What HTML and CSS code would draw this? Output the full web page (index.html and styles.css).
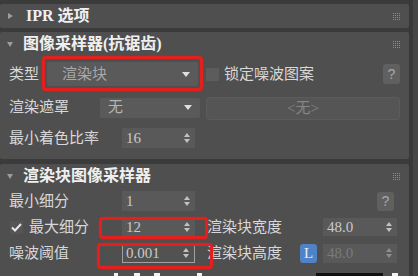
FILE: index.html
```html
<!DOCTYPE html>
<html lang="zh-CN">
<head>
    <meta charset="UTF-8">
    <meta name="viewport" content="width=device-width, initial-scale=1.0">
    <title>图像采样器</title>
    <link rel="stylesheet" href="styles.css">
</head>
<body>

<div class="app">
    <div class="rollouts">

        <section class="rollout ipr">
            <div class="head">
                <span class="tri closed"></span>
                <span class="title">IPR 选项</span>
                <svg class="grip" width="7" height="7" viewBox="0 0 7 7">
                    <g fill="#8c8c8c">
                        <rect x="0" y="0" width="1" height="7"/><rect x="2" y="0" width="1" height="7"/>
                        <rect x="4" y="0" width="1" height="7"/><rect x="6" y="0" width="1" height="7"/>
                    </g>
                    <g fill="#4f4f4f">
                        <rect x="0" y="1" width="7" height="1"/><rect x="0" y="3" width="7" height="1"/>
                        <rect x="0" y="5" width="7" height="1"/>
                    </g>
                </svg>
            </div>
        </section>

        <section class="rollout sampler">
            <div class="head">
                <span class="tri open"></span>
                <span class="title">图像采样器(抗锯齿)</span>
                <svg class="grip" width="7" height="7" viewBox="0 0 7 7">
                    <g fill="#8c8c8c">
                        <rect x="0" y="0" width="1" height="7"/><rect x="2" y="0" width="1" height="7"/>
                        <rect x="4" y="0" width="1" height="7"/><rect x="6" y="0" width="1" height="7"/>
                    </g>
                    <g fill="#4f4f4f">
                        <rect x="0" y="1" width="7" height="1"/><rect x="0" y="3" width="7" height="1"/>
                        <rect x="0" y="5" width="7" height="1"/>
                    </g>
                </svg>
            </div>

            <div class="row type-row">
                <div class="cell-l">
                    <span class="lbl">类型</span>
                    <div class="drop drop-type">渲染块<span class="arrow"></span></div>
                </div>
                <div class="cell-r">
                    <span class="check"></span>
                    <span class="lbl">锁定噪波图案</span>
                    <span class="help">?</span>
                </div>
            </div>

            <div class="row mask-row">
                <div class="cell-l">
                    <span class="lbl">渲染遮罩</span>
                    <div class="drop drop-mask">无<span class="arrow"></span></div>
                </div>
                <div class="cell-r">
                    <div class="pick">&lt;无&gt;</div>
                </div>
            </div>

            <div class="row rate-row">
                <div class="cell-l">
                    <span class="lbl">最小着色比率</span>
                    <div class="spin">16<span class="updown"></span></div>
                </div>
                <div class="cell-r"></div>
            </div>
        </section>

        <section class="rollout bucket">
            <div class="head">
                <span class="tri open"></span>
                <span class="title">渲染块图像采样器</span>
                <svg class="grip" width="7" height="7" viewBox="0 0 7 7">
                    <g fill="#8c8c8c">
                        <rect x="0" y="0" width="1" height="7"/><rect x="2" y="0" width="1" height="7"/>
                        <rect x="4" y="0" width="1" height="7"/><rect x="6" y="0" width="1" height="7"/>
                    </g>
                    <g fill="#4f4f4f">
                        <rect x="0" y="1" width="7" height="1"/><rect x="0" y="3" width="7" height="1"/>
                        <rect x="0" y="5" width="7" height="1"/>
                    </g>
                </svg>
            </div>

            <div class="row brow">
                <div class="cell-l">
                    <span class="lbl">最小细分</span>
                    <div class="spin">1<span class="updown"></span></div>
                </div>
                <div class="cell-r">
                    <span class="help help-b">?</span>
                </div>
            </div>

            <div class="row brow">
                <div class="cell-l">
                    <span class="check checked">
                        <svg width="11" height="9" viewBox="0 0 11 9"><path d="M1 4.5 L4 7.5 L10 1" fill="none" stroke="#e8e8e8" stroke-width="2"/></svg>
                    </span>
                    <span class="lbl">最大细分</span>
                    <div class="spin">12<span class="updown"></span></div>
                </div>
                <div class="cell-r">
                    <span class="lbl">渲染块宽度</span>
                    <div class="spin spin-r">48.0<span class="updown"></span></div>
                </div>
            </div>

            <div class="row brow">
                <div class="cell-l">
                    <span class="lbl">噪波阈值</span>
                    <div class="spin focus">0.001<span class="updown"></span></div>
                </div>
                <div class="cell-r">
                    <span class="lbl">渲染块高度</span>
                    <span class="lock">L</span>
                    <div class="spin spin-r off">48.0<span class="updown"></span></div>
                </div>
            </div>
        </section>

    </div>
    <div class="gutter"></div>
    <div class="scroll"></div>

    <!-- red annotation boxes -->
    <div class="mark mark-type"></div>
    <div class="mark mark-max"></div>
    <div class="mark mark-noise"></div>

    <!-- tops of the toolbar icons below -->
    <span class="peek p1"></span>
    <span class="peek p2"></span>
    <span class="peek p3"></span>
    <span class="peek p4"></span>
    <span class="peek p5"></span>
    <span class="peek p6"></span>
</div>

</body>
</html>
```

FILE: styles.css
```css
body {
    margin: 0;
    background-color: #3b3b3b;
    font-family: "Liberation Serif", "Noto Sans CJK SC", serif;
    font-size: 15px;
    color: #d8d8d8;
}
.app {
    position: relative;
    display: flex;
    width: 418px;
    height: 276px;
    overflow: hidden;
}
.rollouts {
    width: 409px;
    padding-top: 4px;
}
.gutter {
    width: 4px;
    background-color: #393939;
}
.scroll {
    flex: 1;
    background-color: #464646;
}

.rollout {
    background-color: #4f4f4f;
    border-radius: 2px;
}
.ipr {
    height: 24px;
}
.sampler {
    margin-top: 4px;
    height: 127px;
}
.bucket {
    margin-top: 5px;
    height: 120px;
}

.head {
    display: flex;
    align-items: center;
    height: 24px;
    padding-left: 7px;
    padding-right: 9px;
}
.tri {
    width: 0;
    height: 0;
    margin-right: 12px;
}
.tri.closed {
    border-top: 3.5px solid transparent;
    border-bottom: 3.5px solid transparent;
    border-left: 5px solid #9c9c9c;
    margin-left: 1px;
    margin-right: 13px;
}
.tri.open {
    border-left: 3.5px solid transparent;
    border-right: 3.5px solid transparent;
    border-top: 5px solid #9c9c9c;
    margin-right: 10px;
}
.title {
    font-size: 16px;
    font-weight: bold;
    color: #efefef;
    line-height: 1;
}
.grip {
    margin-left: auto;
}

.row {
    display: flex;
}
.cell-l {
    width: 206px;
    display: flex;
    align-items: center;
    padding-left: 9px;
    box-sizing: border-box;
}
.cell-r {
    flex: 1;
    display: flex;
    align-items: center;
    padding-right: 9px;
}
.lbl {
    line-height: 1;
    white-space: nowrap;
}

.type-row {
    height: 36px;
}
.mask-row {
    height: 31px;
}
.rate-row {
    height: 30px;
}

.drop {
    position: relative;
    display: flex;
    align-items: center;
    background-color: #5a5a5a;
    border-radius: 2px;
    color: #a9a9a9;
    line-height: 1;
    box-sizing: border-box;
}
.drop-type {
    width: 151px;
    height: 24px;
    margin-left: auto;
    margin-right: 8px;
    padding-left: 15px;
}
.drop-mask {
    width: 100px;
    height: 20px;
    margin-left: auto;
    margin-right: 6px;
    padding-left: 8px;
    color: #b4b4b4;
}
.arrow {
    margin-left: auto;
    margin-right: 8px;
    width: 0;
    height: 0;
    border-left: 4px solid transparent;
    border-right: 4px solid transparent;
    border-top: 5px solid #dedede;
}

.check {
    width: 13px;
    height: 13px;
    background-color: #5c5c5c;
    margin-right: 5px;
    flex-shrink: 0;
}
.check.checked {
    display: flex;
    align-items: center;
    justify-content: center;
    margin-left: 1px;
    margin-right: 6px;
    background-color: #555555;
}
.help {
    margin-left: auto;
    width: 17px;
    height: 20px;
    border-radius: 3px;
    background-color: #606060;
    color: #a8a8a8;
    font-family: "Liberation Sans", sans-serif;
    font-size: 14px;
    display: flex;
    align-items: center;
    justify-content: center;
}
.help-b {
    margin-right: 3px;
    height: 19px;
}
.pick {
    width: 194px;
    height: 23px;
    margin-top: 2px;
    border: 1px solid #5c5c5c;
    border-radius: 3px;
    background-color: #555555;
    box-sizing: border-box;
    color: #868686;
    display: flex;
    align-items: center;
    justify-content: center;
    line-height: 1;
}

.spin {
    display: flex;
    align-items: center;
    width: 73px;
    height: 20px;
    margin-left: auto;
    margin-right: 11px;
    padding-left: 4px;
    box-sizing: border-box;
    background-color: #595959;
    color: #cacaca;
    line-height: 1;
}
.spin.focus {
    border: 1px solid #a0a0a0;
    padding-left: 3px;
    background-color: #525252;
    height: 19px;
}
.spin-r {
    width: 74px;
    margin-right: 3px;
    height: 18px;
}
.spin.off {
    color: #7b7b7b;
    margin-left: 6px;
    height: 19px;
}
.updown {
    margin-left: auto;
    margin-right: 5px;
    display: flex;
    flex-direction: column;
    gap: 2px;
}
.updown::before,
.updown::after {
    content: "";
    width: 0;
    height: 0;
    border-left: 3px solid transparent;
    border-right: 3px solid transparent;
}
.updown::before {
    border-bottom: 4px solid #c2c2c2;
}
.updown::after {
    border-top: 4px solid #c2c2c2;
}
.off .updown {
    opacity: 0.5;
}

.bucket .head {
    padding-right: 9px;
}
.brow {
    height: 26px;
}
.bucket .row:first-of-type {
    margin-top: 3px;
}
.brow .cell-r {
    padding-left: 1px;
    padding-right: 12px;
}
.brow .cell-r .spin-r {
    margin-right: 0;
}
.lock {
    margin-left: auto;
    width: 17px;
    height: 19px;
    border-radius: 3px;
    background-color: #4f82c6;
    color: #e6eefa;
    font-size: 15px;
    display: flex;
    align-items: center;
    justify-content: center;
    line-height: 1;
}

.mark {
    position: absolute;
    border: 3px solid #e3201d;
    border-radius: 4px;
    box-sizing: border-box;
    box-shadow: 0 0 2px rgba(227, 32, 29, 0.6);
}
.mark-type {
    left: 42px;
    top: 56px;
    width: 161px;
    height: 35px;
}
.mark-max {
    left: 99px;
    top: 217px;
    width: 109px;
    height: 22px;
}
.mark-noise {
    left: 97px;
    top: 243px;
    width: 116px;
    height: 26px;
}

.peek {
    position: absolute;
    top: 273px;
    height: 3px;
    background-color: #f2f2f2;
}
.p1 { left: 114px; width: 4px; }
.p2 { left: 134px; width: 6px; }
.p3 { left: 154px; width: 6px; }
.p4 { left: 197px; width: 5px; }
.p5 { left: 316px; width: 67px; background-color: #111111; }
.p6 { left: 392px; width: 6px; }
```
